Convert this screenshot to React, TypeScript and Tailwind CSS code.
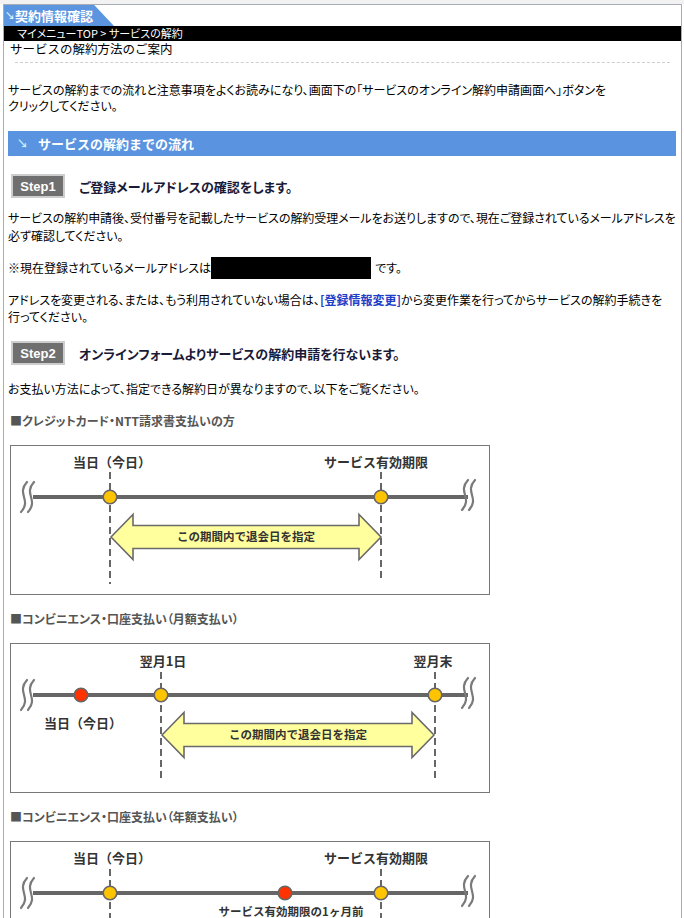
import React from "react";

const FONT = "'Noto Sans CJK JP', 'Noto Sans', sans-serif";

const Squiggle = ({ x, top, bot }: { x: number; top: number; bot: number }) => (
  <g fill="none" stroke="#7a7a7a" strokeWidth={2.2} strokeLinecap="round">
    {[0, 7].map((d) => (
      <path
        key={d}
        d={`M${x + d + 3} ${top} C${x + d - 8} ${top + 12} ${x + d + 8} ${bot - 12} ${x + d - 3} ${bot}`}
      />
    ))}
  </g>
);

const Arrow = ({ x1, x2, cy, label }: { x1: number; x2: number; cy: number; label: string }) => {
  const hw = 22;
  const hh = 22.5;
  const sh = 11.5;
  const pts = [
    [x1, cy],
    [x1 + hw, cy - hh],
    [x1 + hw, cy - sh],
    [x2 - hw, cy - sh],
    [x2 - hw, cy - hh],
    [x2, cy],
    [x2 - hw, cy + hh],
    [x2 - hw, cy + sh],
    [x1 + hw, cy + sh],
    [x1 + hw, cy + hh],
  ]
    .map((p) => p.join(","))
    .join(" ");
  return (
    <g>
      <polygon points={pts} fill="#ffff9e" stroke="#6a6a6a" strokeWidth={1.6} strokeLinejoin="miter" />
      <text
        x={(x1 + x2) / 2}
        y={cy + 4}
        textAnchor="middle"
        fontFamily={FONT}
        fontWeight={700}
        fontSize={11.5}
        fill="#333"
      >
        {label}
      </text>
    </g>
  );
};

const Dash = ({ x, y1, y2 }: { x: number; y1: number; y2: number }) => (
  <line x1={x} y1={y1} x2={x} y2={y2} stroke="#666" strokeWidth={2} strokeDasharray="7 4" />
);

const Dot = ({ x, y, red }: { x: number; y: number; red?: boolean }) => (
  <circle cx={x} cy={y} r={6.8} fill={red ? "#ff3300" : "#ffc400"} stroke="#666" strokeWidth={1.6} />
);

const Label = ({ x, y, children, size = 13 }: { x: number; y: number; children: React.ReactNode; size?: number }) => (
  <text x={x} y={y} textAnchor="middle" fontFamily={FONT} fontWeight={700} fontSize={size} fill="#333">
    {children}
  </text>
);

const Frame = ({ children }: { children: React.ReactNode }) => (
  <svg width={480} height={150} viewBox="0 0 480 150" className="block">
    <rect x={0.5} y={0.5} width={479} height={149} fill="#fff" stroke="#777" strokeWidth={1} />
    {children}
  </svg>
);

const Baseline = ({ y }: { y: number }) => (
  <g>
    <line x1={23} y1={y} x2={458} y2={y} stroke="#666" strokeWidth={4} />
    <Squiggle x={14} top={y - 15} bot={y + 15} />
    <Squiggle x={455} top={y - 17} bot={y + 13} />
  </g>
);

const Diagram1 = () => (
  <Frame>
    <Label x={102} y={22}>当日（今日）</Label>
    <Label x={366} y={22}>サービス有効期限</Label>
    <Dash x={100} y1={27} y2={139} />
    <Dash x={371} y1={27} y2={136} />
    <Baseline y={52} />
    <Dot x={100} y={52} />
    <Dot x={371} y={52} />
    <Arrow x1={101} x2={371} cy={92} label="この期間内で退会日を指定" />
  </Frame>
);

const Diagram2 = () => (
  <Frame>
    <Label x={153} y={23}>翌月1日</Label>
    <Label x={423} y={23}>翌月末</Label>
    <Dash x={151} y1={29} y2={136} />
    <Dash x={425} y1={29} y2={136} />
    <Baseline y={52} />
    <Dot x={71} y={52} red />
    <Dot x={151} y={52} />
    <Dot x={425} y={52} />
    <Label x={73} y={85}>当日（今日）</Label>
    <Arrow x1={152} x2={424} cy={92} label="この期間内で退会日を指定" />
  </Frame>
);

const Diagram3 = () => (
  <Frame>
    <Label x={102} y={22}>当日（今日）</Label>
    <Label x={366} y={22}>サービス有効期限</Label>
    <Dash x={100} y1={28} y2={139} />
    <Dash x={371} y1={28} y2={139} />
    <Baseline y={52} />
    <Dot x={100} y={52} />
    <Dot x={275} y={52} red />
    <Dot x={371} y={52} />
    <Label x={281} y={75} size={11.5}>サービス有効期限の1ヶ月前</Label>
    <Arrow x1={101} x2={275} cy={112} label="この期間内で退会日を指定" />
  </Frame>
);

const StepBadge = ({ n }: { n: number }) => (
  <div className="flex h-[24px] w-[54px] items-center justify-center border-2 border-[#cdcdcd] bg-[#6f6f6f] font-['Liberation_Sans',Arial,sans-serif] text-[13px] font-bold leading-none text-white">
    Step{n}
  </div>
);

const SubHead = ({ children }: { children: React.ReactNode }) => (
  <div className="pl-[6px] text-[12px] font-bold leading-[17px] text-[#555] [font-feature-settings:'palt']">
    {children}
  </div>
);

export default function App() {
  return (
    <div className="min-h-screen bg-white font-['Noto_Sans_CJK_JP','Noto_Sans',sans-serif] text-[12px] text-black">
      <div className="h-[4px] bg-[#f2f2f2]" />
      <div className="ml-[3px] mr-[2px] min-h-[914px] border-l border-r border-t border-[#a8acb4] bg-white">
        {/* header tab */}
        <div className="flex">
          <div className="flex h-[21px] w-[110px] items-center bg-[#5b95e0] [clip-path:polygon(0_0,82%_0,100%_100%,0_100%)]">
            <span className="ml-[1px] text-[10px] font-bold leading-none text-[#d8f4ff]">↘</span>
            <span className="text-[13px] font-bold leading-none text-white">契約情報確認</span>
          </div>
        </div>
        {/* breadcrumb */}
        <div className="h-[15px] bg-black pl-[13px] text-[11px] leading-[15px] text-white [font-feature-settings:'palt']">
          マイメニューTOP &gt; サービスの解約
        </div>
        <div className="pl-[6px] text-[12.5px] leading-[16px]">サービスの解約方法のご案内</div>
        <div className="mx-[11px] mt-[5px] border-t border-dashed border-[#cfcfcf]" />

        <div className="pr-[5px] pl-[4px]">
          <p className="mt-[19px] whitespace-nowrap leading-[16px] [font-feature-settings:'palt']">
            サービスの解約までの流れと注意事項をよくお読みになり、画面下の「サービスのオンライン解約申請画面へ」ボタンを
            <br />
            クリックしてください。
          </p>

          <div className="mt-[17px] flex h-[25px] items-center bg-[#5a94e0]">
            <span className="ml-[9px] text-[11px] font-bold leading-none text-[#cdf2ff]">↘</span>
            <span className="ml-[10px] text-[13px] font-bold leading-none text-white">サービスの解約までの流れ</span>
          </div>

          <div className="mt-[18px] flex items-center pl-[3px]">
            <StepBadge n={1} />
            <span className="ml-[14px] text-[13px] font-bold leading-none text-[#1a1a38] [font-feature-settings:'palt']">
              ご登録メールアドレスの確認をします。
            </span>
          </div>

          <p className="mt-[11px] whitespace-nowrap leading-[18px] tracking-[-0.05px] [font-feature-settings:'palt']">
            サービスの解約申請後、受付番号を記載したサービスの解約受理メールをお送りしますので、現在ご登録されているメールアドレスを
            <br />
            必ず確認してください。
          </p>

          <div className="mt-[12px] flex h-[22px] items-center [font-feature-settings:'palt']">
            <span>※現在登録されているメールアドレスは</span>
            <span className="inline-block h-[22px] w-[160px] bg-black" />
            <span className="ml-[4px]">です。</span>
          </div>

          <p className="mt-[12px] whitespace-nowrap leading-[17px] [font-feature-settings:'palt']">
            アドレスを変更される、または、もう利用されていない場合は、
            <span className="font-bold text-[#1f3fc8]">[登録情報変更]</span>
            から変更作業を行ってからサービスの解約手続きを
            <br />
            行ってください。
          </p>

          <div className="mt-[16px] flex items-center pl-[3px]">
            <StepBadge n={2} />
            <span className="ml-[14px] text-[13px] font-bold leading-none text-[#1a1a38] [font-feature-settings:'palt']">
              オンラインフォームよりサービスの解約申請を行ないます。
            </span>
          </div>

          <p className="mt-[15px] leading-[17px] [font-feature-settings:'palt']">
            お支払い方法によって、指定できる解約日が異なりますので、以下をご覧ください。
          </p>
        </div>

        <div className="mt-[15px]">
          <SubHead>■クレジットカード・NTT請求書支払いの方</SubHead>
        </div>
        <div className="mt-[16px] pl-[6px]">
          <Diagram1 />
        </div>

        <div className="mt-[15px]">
          <SubHead>■コンビニエンス・口座支払い（月額支払い）</SubHead>
        </div>
        <div className="mt-[16px] pl-[6px]">
          <Diagram2 />
        </div>

        <div className="mt-[15px]">
          <SubHead>■コンビニエンス・口座支払い（年額支払い）</SubHead>
        </div>
        <div className="mt-[16px] pl-[6px]">
          <Diagram3 />
        </div>
        <div className="h-[20px]" />
      </div>
    </div>
  );
}
